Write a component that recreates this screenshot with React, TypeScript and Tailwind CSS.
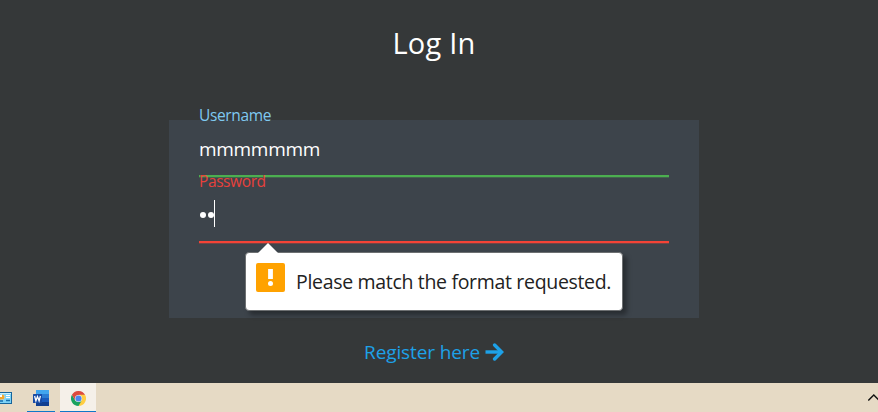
import React from "react";

const fontStack = "font-['Open_Sans','Noto_Sans',sans-serif]";

function Field({ label, labelClass, lineClass, children }: {
  label: string;
  labelClass: string;
  lineClass: string;
  children: React.ReactNode;
}) {
  return (
    <div className="relative h-[66px]">
      <label className={`absolute left-0 top-[-16px] z-10 whitespace-nowrap text-[15.5px] leading-[22px] ${labelClass}`}>{label}</label>
      <div className={`flex h-[57px] items-center border-b-2 pt-[3px] ${lineClass}`}>{children}</div>
    </div>
  );
}

function WarningIcon() {
  return (
    <svg className="mt-[-9px] shrink-0" width="29" height="29" viewBox="0 0 29 29">
      <rect width="29" height="29" rx="2" fill="#ffa200" />
      <rect x="12.1" y="6" width="4.8" height="10" fill="#fff" />
      <circle cx="14.5" cy="20.5" r="2.5" fill="#fff" />
    </svg>
  );
}

function Tooltip() {
  return (
    <div className="absolute left-[76px] top-[132px] flex h-[59px] w-[378px] items-center rounded-[4px] border border-[#6d7072] bg-white pl-[10px] shadow-[4px_4px_5px_rgba(0,0,0,0.35)]">
      <svg className="absolute left-[11px] top-[-11px]" width="22" height="12" viewBox="0 0 22 12">
        <path d="M0 12 L11 1 L22 12Z" fill="#fff" />
      </svg>
      <WarningIcon />
      <span className="ml-[11px] whitespace-nowrap pt-px text-[19.5px] tracking-[-0.32px] text-[#222]">Please match the format requested.</span>
    </div>
  );
}

function ArrowRight() {
  return (
    <svg className="ml-[5px] mt-[-1px]" width="19" height="18" viewBox="0 0 19 18" fill="none" stroke="#1da1e8" strokeWidth="3.4" strokeLinecap="round">
      <path d="M0.5 9 H16" strokeLinecap="butt" />
      <path d="M9.6 2 L16.6 9 L9.6 16" />
    </svg>
  );
}

function ContactCard() {
  return (
    <svg className="mt-[9px]" width="12" height="12" viewBox="0 0 12 12">
      <rect width="12" height="12" fill="#16659c" />
      <rect width="11" height="10" y="1" fill="#7ed3f7" />
      <rect width="11" height="1" y="1" fill="#c8f0ff" />
      <circle cx="2" cy="5" r="2.5" fill="#fff" />
      <path d="M2 5V2.5A2.5 2.5 0 0 1 2 7.5H0V5Z" fill="#f2a52b" />
      <path d="M6 3.5H10M6 5.5H10" stroke="#fff" />
      <path d="M0 9H3M6 8.5H10" stroke="#176fae" strokeWidth="1.5" />
    </svg>
  );
}

function WordIcon() {
  return (
    <svg width="16" height="16" viewBox="0 0 16 16">
      <path d="M3 0H16V4H3Z" fill="#41a5ee" />
      <path d="M3 4H16V8H3Z" fill="#2b7cd3" />
      <path d="M3 8H16V12H3Z" fill="#185abd" />
      <path d="M3 12H16V16H3Z" fill="#103f91" />
      <rect y="4" width="9" height="9" rx="0.5" fill="#174ba6" />
      <path d="M1.6 6 L2.9 10.8 L4.5 6.5 L6.1 10.8 L7.4 6" fill="none" stroke="#fff" strokeWidth="1.3" />
    </svg>
  );
}

function ChromeIcon() {
  return (
    <svg width="15" height="15" viewBox="0 0 48 48">
      <path d="M24 24 L3.2 12 A24 24 0 0 1 44.8 12 Z" fill="#dd4b3e" />
      <path d="M24 24 L44.8 12 A24 24 0 0 1 24 48 Z" fill="#ffcd43" />
      <path d="M13.6 30 L3.2 12 A24 24 0 0 0 24 48 L34.4 30 Z" fill="#1aa260" />
      <path d="M24 12 H44.8 L34.4 30 Z" fill="#ffcd43" />
      <path d="M13.6 30 L3.2 12 L24 12 Z" fill="#dd4b3e" />
      <circle cx="24" cy="24" r="11.5" fill="#f5f3ee" />
      <circle cx="24" cy="24" r="9.8" fill="#4f86ec" />
    </svg>
  );
}

function Taskbar() {
  return (
    <footer className="flex h-[29px] justify-between bg-[#e6dac5]">
      <div className="flex">
        <ContactCard />
        <div className="ml-[15px] flex w-[28px] justify-center border-b border-[#0f78c8] pt-[7px]">
          <WordIcon />
        </div>
        <div className="ml-[5px] flex w-[36px] justify-center border-b border-[#0f78c8] bg-[#f5f0e9] pt-[8px]">
          <ChromeIcon />
        </div>
      </div>
      <svg className="mt-[10px]" width="10" height="9" viewBox="0 0 10 9">
        <path d="M0.3 7.5 L5.8 2 L11.3 7.5" fill="none" stroke="#111" strokeWidth="1.4" />
      </svg>
    </footer>
  );
}

export default function App() {
  return (
    <div className={`flex h-[412px] w-[878px] flex-col overflow-hidden bg-[#353839] ${fontStack}`}>
      <main className="flex h-[383px] flex-col pl-[169px]">
        <h1 className="flex h-[120px] w-[530px] justify-center pt-[23px] text-[29px] leading-[40px] tracking-[0.2px] text-white">Log In</h1>
        <form className="relative h-[198px] w-[530px] bg-[#3d444b] px-[30px]">
          <Field label="Username" labelClass="tracking-[-0.35px] text-[#7fc9f0]" lineClass="border-[#4caf50] shadow-[0_1px_0_rgba(76,175,80,0.3)]">
            <span className="text-[19px] tracking-[-0.3px] text-white">mmmmmmm</span>
          </Field>
          <Field label="Password" labelClass="tracking-[-0.4px] text-[#e8413b]" lineClass="border-[#f44336] shadow-[0_1px_0_rgba(244,67,54,0.3)]">
            <span className="flex items-center gap-[2px] pl-[1px]">
              <i className="size-[6px] rounded-full bg-white" />
              <i className="size-[6px] rounded-full bg-white" />
              <i className="-ml-[2px] -mt-1 h-[27px] w-px bg-white" />
            </span>
          </Field>
          <Tooltip />
        </form>
        <a className="flex w-[530px] items-center justify-center pt-[20px] text-[19px] leading-[28px] tracking-[-0.12px] text-[#1da1e8]">
          Register here
          <ArrowRight />
        </a>
      </main>
      <Taskbar />
    </div>
  );
}
